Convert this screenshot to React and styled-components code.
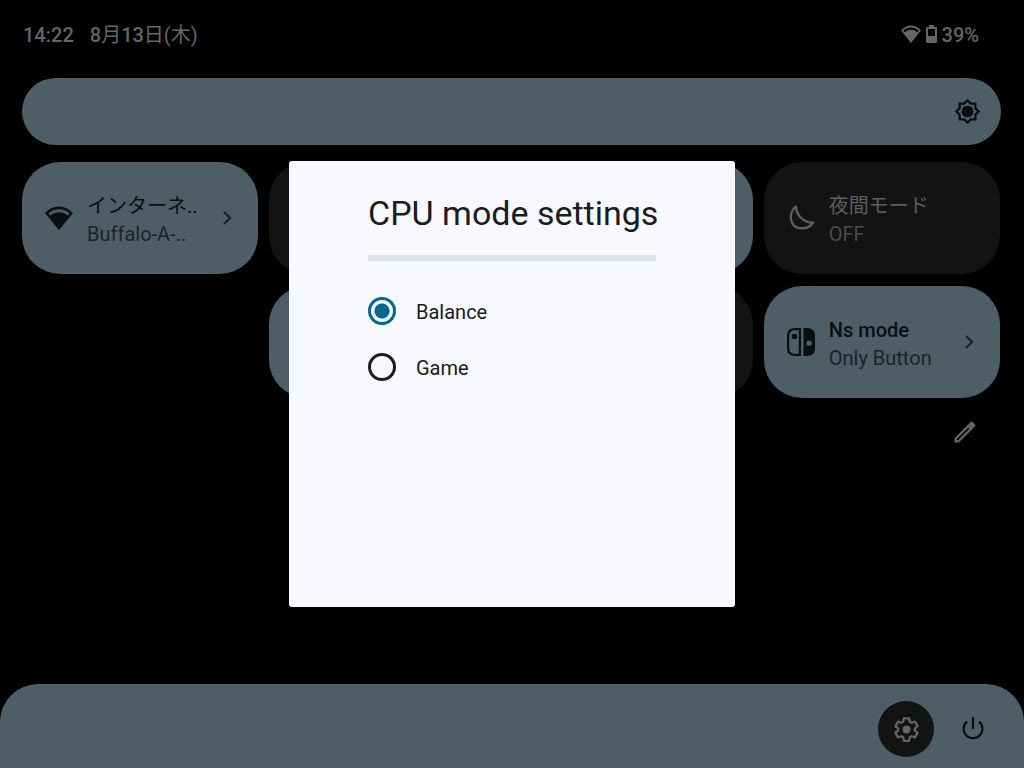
import React, { useState } from "react";
import styled, { createGlobalStyle } from "styled-components";

const color = {
  active: "#4d5e66",
  inactive: "#111413",
  onActive: "#0b0e10",
  onActiveSoft: "#1d2326",
  onInactive: "#5e5e5e",
  onInactiveSoft: "#4a4b4e",
  status: "#656565",
  surface: "#f8f9fe",
  ink: "#191c20",
  accent: "#00688f",
  divider: "#dce4e9",
};

const GlobalStyle = createGlobalStyle`
  * { box-sizing: border-box; }
  body {
    margin: 0;
    background: #000;
    font-family: Roboto, "Noto Sans CJK JP", sans-serif;
    font-size: 20px;
    line-height: 28px;
  }
  button, input { font: inherit; margin: 0; }
`;

const Screen = styled.div`
  min-height: 100vh;
  display: flex;
  flex-direction: column;
`;

const StatusBar = styled.header`
  display: flex;
  justify-content: space-between;
  align-items: center;
  padding: 21px 45px 0 23px;
  color: ${color.status};
  font-weight: 500;
`;

const Clock = styled.div`
  display: flex;
  gap: 16px;
`;

const Kanji = styled.span`
  font-weight: 400;
`;

const StatusIcons = styled.div`
  display: flex;
  align-items: center;
  gap: 5px;

  svg { margin-bottom: 2px; }
`;

const Shade = styled.main`
  flex: 1;
  display: flex;
  flex-direction: column;
  padding: 29px 23px 0 22px;
`;

const Brightness = styled.label`
  position: relative;
  display: block;
  color: ${color.onActive};

  svg {
    position: absolute;
    top: 20px;
    right: 20px;
    pointer-events: none;
  }
`;

const BrightnessRange = styled.input`
  appearance: none;
  display: block;
  width: 100%;
  height: 67px;
  border-radius: 34px;
  background: ${color.active};

  &::-webkit-slider-thumb {
    appearance: none;
    width: 67px;
    height: 67px;
    background: transparent;
  }
`;

const TileGrid = styled.div`
  display: grid;
  grid-template-columns: repeat(4, 1fr);
  gap: 12px 11px;
  margin-top: 17px;
  padding-right: 1px;
`;

const TileButton = styled.button`
  grid-column: ${(p) => p.$column};
  display: flex;
  align-items: center;
  height: 112px;
  min-width: 0;
  padding: 0 23px;
  border: 0;
  border-radius: 38px;
  text-align: left;
  background: ${(p) => (p.$active ? color.active : color.inactive)};
  color: ${(p) => (p.$active ? color.onActive : color.onInactive)};

  > svg { flex: none; }
`;

const TileText = styled.span`
  flex: 1;
  min-width: 0;
  display: flex;
  flex-direction: column;
  margin-left: 14px;
  padding-top: 3px;
  white-space: nowrap;
`;

const TileTitle = styled.span`
  font-weight: 500;

  &:lang(ja) { font-weight: 400; }
`;

const TileState = styled.span`
  color: ${(p) => (p.$active ? color.onActiveSoft : color.onInactiveSoft)};
`;

const EditButton = styled.button`
  align-self: flex-end;
  display: flex;
  margin: 20px 22px 20px 0;
  padding: 0;
  border: 0;
  background: none;
  color: ${color.status};
`;

const Footer = styled.footer`
  display: flex;
  justify-content: flex-end;
  gap: 11px;
  padding: 17px 23px 11px;
  border-radius: 38px 38px 0 0;
  background: ${color.active};
`;

const RoundButton = styled.button`
  display: flex;
  align-items: center;
  justify-content: center;
  width: 56px;
  height: 56px;
  padding: 0;
  border: 0;
  border-radius: 50%;
  background: ${(p) => (p.$filled ? color.inactive : "transparent")};
  color: ${(p) => (p.$filled ? color.status : color.onActive)};
`;

const Backdrop = styled.div`
  position: fixed;
  inset: 0;
  display: flex;
  align-items: center;
  justify-content: center;
`;

const Dialog = styled.section`
  width: 446px;
  max-width: 100%;
  min-height: 446px;
  padding: 32px 79px;
  border-radius: 3px;
  background: ${color.surface};
  color: ${color.ink};
`;

const DialogTitle = styled.h1`
  margin: 0 0 28px;
  padding-bottom: 22px;
  border-bottom: 6px solid ${color.divider};
  font-size: 34px;
  line-height: 40px;
  font-weight: 400;
  white-space: nowrap;
`;

const Options = styled.fieldset`
  margin: 0;
  padding: 0;
  border: 0;
  display: flex;
  flex-direction: column;
  gap: 12px;
`;

const Option = styled.label`
  display: flex;
  align-items: center;
  gap: 20px;
  height: 44px;
`;

const OptionName = styled.span`
  padding-top: 2px;
`;

const Radio = styled.input`
  appearance: none;
  width: 28px;
  height: 28px;
  border: 3px solid ${color.ink};
  border-radius: 50%;

  &:checked {
    border-color: ${color.accent};
    background: radial-gradient(circle, ${color.accent} 7px, transparent 8px);
  }
`;

function WifiIcon({ width, height }) {
  return (
    <svg width={width} height={height} viewBox="0 0 28 24" preserveAspectRatio="none" fill="currentColor" aria-hidden="true">
      <path
        fillRule="evenodd"
        d="M0 7C8-1.6 20-1.6 28 7L14 24ZM3.4 7.4L5.2 9.6C10.6 5.2 17.4 5.2 22.8 9.6L24.6 7.4C18.4 1.8 9.6 1.8 3.4 7.4Z"
      />
    </svg>
  );
}

function BatteryIcon() {
  return (
    <svg width="11" height="18" viewBox="0 0 11 18" fill="currentColor" aria-hidden="true">
      <path
        fillRule="evenodd"
        d="M3 0H8V2H10Q11 2 11 3V17Q11 18 10 18H1Q0 18 0 17V3Q0 2 1 2H3ZM2 4V11H9V4Z"
      />
    </svg>
  );
}

function SunIcon() {
  return (
    <svg width="27" height="27" viewBox="0 0 24 24" fill="currentColor" aria-hidden="true">
      <path
        fillRule="evenodd"
        d="M20 8.69V4h-4.69L12 .69 8.69 4H4v4.69L.69 12 4 15.31V20h4.69L12 23.31 15.31 20H20v-4.69L23.31 12ZM18 14.48V18h-3.52L12 20.48 9.52 18H6v-3.52L3.52 12 6 9.52V6h3.52L12 3.52 14.48 6H18v3.52L20.48 12Z"
      />
      <circle cx="12" cy="12" r="5.2" />
    </svg>
  );
}

function MoonIcon() {
  return (
    <svg width="28" height="28" viewBox="0 0 28 28" fill="none" stroke="currentColor" strokeWidth="2.4" strokeLinejoin="round" aria-hidden="true">
      <path d="M9 2.500C1 8 2 24 14.500 24.300C19 24.500 23.500 22.500 26 18.500C17.500 19 9 11.500 9 2.500Z" />
    </svg>
  );
}

function ControllerIcon() {
  return (
    <svg width="28" height="28" viewBox="0 0 28 28" fill="currentColor" aria-hidden="true">
      <path
        fillRule="evenodd"
        d="M8 0H14V28H8Q0 28 0 20V8Q0 0 8 0ZM8 2.200Q2.200 2.200 2.200 8V20Q2.200 25.800 8 25.800H11.800V2.200Z"
      />
      <circle cx="7.500" cy="8.500" r="2.800" />
      <path
        fillRule="evenodd"
        d="M16.500 0H20Q28 0 28 8V20Q28 28 20 28H16.500ZM24.800 15.200A2.700 2.700 0 1 0 19.400 15.200A2.700 2.700 0 1 0 24.800 15.200Z"
      />
    </svg>
  );
}

function ChevronIcon() {
  return (
    <svg width="16" height="16" viewBox="0 0 16 16" fill="none" stroke={color.onActiveSoft} strokeWidth="2.4" aria-hidden="true">
      <path d="M5 2L11 8L5 14" />
    </svg>
  );
}

function PencilIcon() {
  return (
    <svg width="28" height="28" viewBox="0 0 24 24" fill="currentColor" aria-hidden="true">
      <path
        fillRule="evenodd"
        d="M3 17.25V21h3.75L20.7 7.04c.39-.39.39-1.02 0-1.41l-2.34-2.34c-.39-.39-1.02-.39-1.41 0ZM5 18.08L14.800 8.280L15.720 9.200L5.920 19H5Z"
      />
    </svg>
  );
}

function GearIcon() {
  return (
    <svg width="27" height="27" viewBox="0 0 24 24" fill="none" stroke="currentColor" strokeWidth="2" strokeLinejoin="round" aria-hidden="true">
      <path d="M19.43 12.98c.04-.32.07-.64.07-.98s-.03-.66-.07-.98l2.11-1.65c.19-.15.24-.42.12-.64l-2-3.46c-.12-.22-.39-.3-.61-.22l-2.49 1c-.52-.4-1.08-.73-1.69-.98l-.38-2.65C14.46 2.18 14.25 2 14 2h-4c-.25 0-.46.18-.49.42l-.38 2.65c-.61.25-1.17.59-1.69.98l-2.49-1c-.23-.09-.49 0-.61.22l-2 3.46c-.13.22-.07.49.12.64l2.11 1.65c-.04.32-.07.65-.07.98s.03.66.07.98l-2.11 1.65c-.19.15-.24.42-.12.64l2 3.46c.12.22.39.3.61.22l2.49-1c.52.4 1.08.73 1.69.98l.38 2.65c.03.24.24.42.49.42h4c.25 0 .46-.18.49-.42l.38-2.65c.61-.25 1.17-.59 1.69-.98l2.49 1c.23.09.49 0 .61-.22l2-3.46c.12-.22.07-.49-.12-.64Z" />
      <circle cx="12" cy="12" r="3.500" fill="currentColor" stroke="none" />
    </svg>
  );
}

function PowerIcon() {
  return (
    <svg width="24" height="24" viewBox="0 0 24 24" fill="none" stroke="currentColor" strokeWidth="2.200" aria-hidden="true">
      <path d="M12 0V12M6 4.600A9.400 9.400 0 1 0 18 4.600" />
    </svg>
  );
}

function Tile({ active, column, icon, title, titleLang, state, opens, label }) {
  return (
    <TileButton type="button" $active={active} $column={column} aria-label={label}>
      {icon}
      {title && (
        <TileText>
          <TileTitle lang={titleLang}>{title}</TileTitle>
          <TileState $active={active}>{state}</TileState>
        </TileText>
      )}
      {opens && <ChevronIcon />}
    </TileButton>
  );
}

const modes = ["Balance", "Game"];

export default function App() {
  const [mode, setMode] = useState("Balance");
  const [level, setLevel] = useState(100);

  return (
    <>
      <GlobalStyle />
      <Screen lang="ja">
        <StatusBar>
          <Clock>
            <span>14:22</span>
            <span>
              8<Kanji>月</Kanji>13<Kanji>日(木)</Kanji>
            </span>
          </Clock>
          <StatusIcons>
            <WifiIcon width={20} height={18} />
            <BatteryIcon />
            <span>39%</span>
          </StatusIcons>
        </StatusBar>
        <Shade>
          <Brightness>
            <BrightnessRange
              type="range"
              aria-label="Brightness"
              value={level}
              onChange={(e) => setLevel(Number(e.target.value))}
            />
            <SunIcon />
          </Brightness>
          <TileGrid>
            <Tile active column={1} icon={<WifiIcon width={28} height={24} />} title="インターネ.." titleLang="ja" state="Buffalo-A-.." opens />
            <Tile column={2} label="Tile" />
            <Tile active column={3} label="Tile" />
            <Tile column={4} icon={<MoonIcon />} title="夜間モード" titleLang="ja" state="OFF" />
            <Tile active column={2} label="Tile" />
            <Tile column={3} label="Tile" />
            <Tile active column={4} icon={<ControllerIcon />} title="Ns mode" titleLang="en" state="Only Button" opens />
          </TileGrid>
          <EditButton type="button" aria-label="Edit">
            <PencilIcon />
          </EditButton>
        </Shade>
        <Footer>
          <RoundButton type="button" $filled aria-label="Settings">
            <GearIcon />
          </RoundButton>
          <RoundButton type="button" aria-label="Power">
            <PowerIcon />
          </RoundButton>
        </Footer>
      </Screen>
      <Backdrop>
        <Dialog role="dialog" aria-labelledby="mode-title">
          <DialogTitle id="mode-title">CPU mode settings</DialogTitle>
          <Options aria-labelledby="mode-title">
            {modes.map((name) => (
              <Option key={name}>
                <Radio type="radio" name="mode" checked={mode === name} onChange={() => setMode(name)} />
                <OptionName>{name}</OptionName>
              </Option>
            ))}
          </Options>
        </Dialog>
      </Backdrop>
    </>
  );
}
